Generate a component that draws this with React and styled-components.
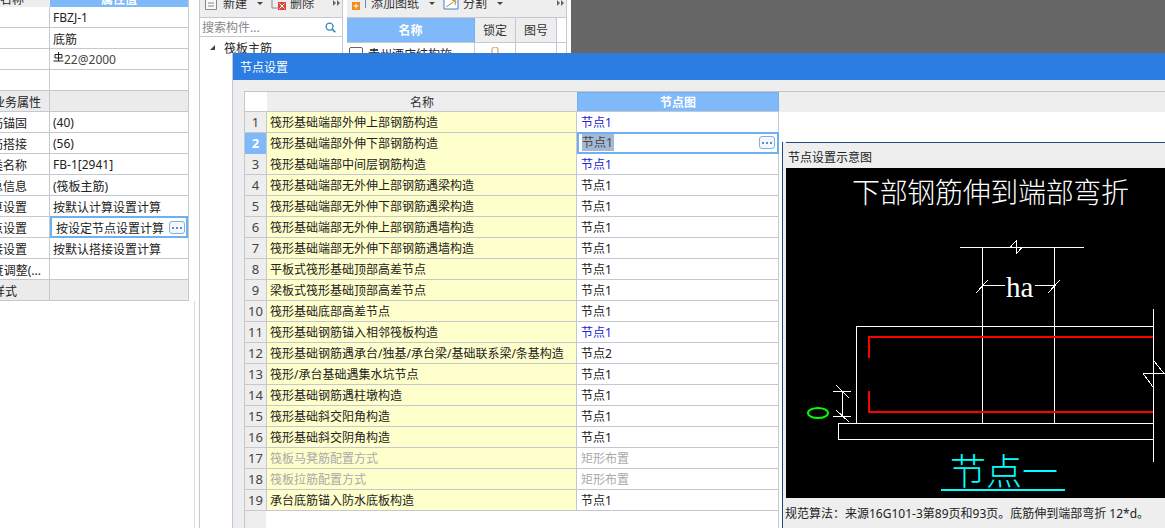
import styled, { createGlobalStyle } from "styled-components";

const GlobalStyle = createGlobalStyle`
    html, body {
        margin: 0;
        padding: 0;
        background: #fff;
        overflow: hidden;
    }
    * {
        box-sizing: border-box;
    }
    body {
        font-family: "Noto Sans", "Noto Sans CJK SC", "Liberation Sans", sans-serif;
        font-size: 12px;
        color: #222;
    }
`;

const Page = styled.div`
    position: relative;
    width: 1165px;
    height: 528px;
    overflow: hidden;
    display: flex;
    background: #fff;
`;

/* property grid on the far left */
const PropTable = styled.div`
    width: 189px;
    flex: none;
    align-self: flex-start;
    border-right: 1px solid #c4c8d0;
`;

const PropHead = styled.div`
    height: 7px;
    display: grid;
    grid-template-columns: 50px 1fr;
    overflow: hidden;
    background: #eee;
`;

const PropHeadLabel = styled.div`
    height: 7px;
    line-height: 14px;
    margin-top: -7px;
    padding-top: 0;
    text-align: right;
    padding-right: 26px;
    white-space: nowrap;
`;

const PropHeadValue = styled.div`
    background: #7fb9f9;
    color: #fff;
    font-weight: 700;
    line-height: 14px;
    margin-top: -7px;
    height: 14px;
    text-align: center;
`;

const PropRow = styled.div`
    height: 21px;
    display: grid;
    grid-template-columns: 50px 1fr;
    border-bottom: 1px solid #c4c8d0;
    background: ${(p) => (p.$group ? "#ebebeb" : "#fff")};
`;

const PropLabel = styled.div`
    display: flex;
    justify-content: flex-end;
    align-items: center;
    overflow: hidden;
    white-space: nowrap;
    border-right: 1px solid #c4c8d0;
    padding: 1px ${(p) => p.$inset}px 0 0;
`;

const PropValue = styled.div`
    display: flex;
    align-items: center;
    padding: 1px 0 0 3px;
    white-space: nowrap;
    color: ${(p) => p.$tone || "#222"};
`;

const PropEditor = styled.div`
    display: flex;
    align-items: center;
    justify-content: space-between;
    margin: -1px 0 -1px 0;
    height: 22px;
    padding: 1px 1px 0 4px;
    border: 2px solid #6fb0f0;
    background: #fff;
    white-space: nowrap;
`;

const MoreButton = styled.span`
    width: 16px;
    height: 13px;
    flex: none;
    display: flex;
    align-items: center;
    justify-content: center;
    gap: 2px;
    border: 1px solid #7fb0e0;
    border-radius: 3px;
    background: #f4f8fd;

    i {
        width: 2px;
        height: 2px;
        background: #5a90c8;
    }
`;

const Gutter = styled.div`
    width: 11px;
    flex: none;
    border-right: 1px solid #c4c8d0;
    position: relative;

    &::before {
        content: "";
        position: absolute;
        top: 301px;
        bottom: 0;
        left: 5px;
        width: 1px;
        background: #dcdcdc;
    }
`;

/* the two drawing panels behind the dialog */
const Panel = styled.div`
    flex: none;
    width: ${(p) => p.$width}px;
    margin-right: ${(p) => p.$gap}px;
    border-right: 1px solid #c4c8d0;
    display: flex;
    flex-direction: column;
`;

const Toolbar = styled.div`
    height: 18px;
    flex: none;
    overflow: hidden;
    background: #eee;
    border-bottom: 1px solid #c4c8d0;
    position: relative;
`;

const ToolRow = styled.div`
    height: 18px;
    margin-top: -6px;
    display: flex;
    align-items: center;
    padding-left: ${(p) => p.$pad}px;
`;

const ToolIcon = styled.svg`
    flex: none;
    margin-right: ${(p) => p.$gap}px;
`;

const ToolText = styled.span`
    white-space: nowrap;
    color: #333;
`;

const Caret = styled.span`
    width: 0;
    height: 0;
    margin: 0 ${(p) => p.$after}px 0 10px;
    border-left: 3px solid transparent;
    border-right: 3px solid transparent;
    border-top: 3px solid #444;
`;

const Overflow = styled.span`
    position: absolute;
    top: 0;
    right: 2px;
    display: flex;
    gap: 1px;

    i {
        width: 0;
        height: 0;
        border-top: 3px solid transparent;
        border-bottom: 3px solid transparent;
        border-left: 3px solid #666;
    }
`;

const SearchBar = styled.div`
    height: 19px;
    flex: none;
    display: flex;
    align-items: center;
    padding: 0 6px 0 2px;
    border-bottom: 1px solid #c4c8d0;
`;

const SearchInput = styled.input`
    flex: 1;
    min-width: 0;
    border: none;
    outline: none;
    padding: 0;
    font: inherit;
    background: transparent;

    &::placeholder {
        color: #888;
        opacity: 1;
    }
`;

const TreeRow = styled.div`
    height: 21px;
    display: flex;
    align-items: center;
    padding-left: 10px;
`;

const TreeArrow = styled.span`
    width: 0;
    height: 0;
    margin: 0 9px 0 0;
    border-bottom: 5px solid #444;
    border-left: 5px solid transparent;
`;

const DrawingHead = styled.div`
    height: 25px;
    flex: none;
    display: grid;
    grid-template-columns: 128px 41px 41px 1fr;
    border-bottom: 1px solid #c4c8d0;
`;

const HeadCell = styled.div`
    display: flex;
    align-items: center;
    justify-content: center;
    font-weight: ${(p) => (p.$active ? 700 : 400)};
    color: ${(p) => (p.$active ? "#fff" : "#333")};
    background: ${(p) => (p.$active ? "#7fb9f9" : p.$blank ? "#fff" : "#eee")};
    border-right: 1px solid ${(p) => (p.$active ? "#6fb0f0" : "#c4c8d0")};
    ${(p) => p.$blank && "border-right: none;"}
`;

const DrawingRow = styled.div`
    height: 21px;
    display: grid;
    grid-template-columns: 128px 41px 41px;
`;

const DrawingCell = styled.div`
    display: flex;
    align-items: center;
    justify-content: ${(p) => (p.$center ? "center" : "flex-start")};
    gap: 5px;
    padding-left: ${(p) => (p.$center ? 0 : 2)}px;
    border-right: 1px solid #c4c8d0;
    white-space: nowrap;
    overflow: hidden;
`;

const Collapse = styled.span`
    width: 14px;
    height: 14px;
    flex: none;
    border: 1px solid #666;
    border-radius: 2px;
    display: flex;
    align-items: center;
    justify-content: center;

    &::after {
        content: "";
        width: 6px;
        height: 2px;
        background: #333;
    }
`;

const Backdrop = styled.div`
    flex: 1;
    height: 53px;
    background: #666;
`;

/* dialog sits over everything else */
const Dialog = styled.div`
    position: absolute;
    left: 232px;
    top: 53px;
    right: 0;
    bottom: 0;
    display: flex;
    flex-direction: column;
    background: #eee;
    border-left: 1px solid #bcc8dc;
`;

const DialogTitle = styled.div`
    height: 27px;
    flex: none;
    display: flex;
    align-items: center;
    padding-left: 7px;
    background: #2b7de1;
    color: #fff;
`;

const DialogBody = styled.div`
    flex: 1;
    min-height: 0;
    padding: 11px 0 0 11px;
    display: flex;
`;

const Frame = styled.div`
    flex: 1;
    display: flex;
    border-top: 1px solid #c4c4c4;
    border-left: 1px solid #c4c8d0;
    background: #fff;
`;

const GridSide = styled.div`
    width: 534px;
    flex: none;
    display: flex;
    flex-direction: column;
    border-right: 1px solid #c4c8d0;
    background: linear-gradient(to right, #eee 21px, #fff 21px);
`;

const GridRow = styled.div`
    display: grid;
    grid-template-columns: 22px 310px 1fr;
    height: ${(p) => (p.$head ? 20 : 21)}px;
    margin-right: -1px;
    border-bottom: 1px solid #c4c8d0;
`;

const RowNo = styled.div`
    display: flex;
    align-items: center;
    justify-content: center;
    padding-bottom: 1px;
    font-size: 13px;
    border-right: 1px solid #c4c8d0;
    background: ${(p) => (p.$active ? "#7fb9f9" : p.$head ? "#fff" : "#eee")};
    color: ${(p) => (p.$active ? "#fff" : "#444")};
    font-weight: ${(p) => (p.$active ? 700 : 400)};
    ${(p) => p.$head && "border-right: none;"}
`;

const NameCell = styled.div`
    display: flex;
    align-items: center;
    padding: 0 0 1px 3px;
    white-space: nowrap;
    border-right: 1px solid #c4c8d0;
    background: #ffc;
    color: ${(p) => (p.$muted ? "#aaa" : "#222")};
`;

const NameHead = styled.div`
    display: flex;
    align-items: center;
    justify-content: center;
    background: #eee;
    color: #333;
`;

const ValueHead = styled.div`
    display: flex;
    align-items: center;
    justify-content: center;
    background: #7fb9f9;
    color: #fff;
    font-weight: 700;
    border: 1px solid #6fb0f0;
    border-bottom: none;
`;

const ValueCell = styled.div`
    display: flex;
    align-items: center;
    padding: 0 0 1px 4px;
    white-space: nowrap;
    color: ${(p) => (p.$muted ? "#aaa" : p.$link ? "#2222dd" : "#222")};
`;

const ValueEditor = styled.div`
    display: flex;
    align-items: center;
    justify-content: space-between;
    height: 22px;
    margin-top: -1px;
    padding: 0 2px 1px 3px;
    border: 2px solid #6fb0f0;
    background: #fff;
`;

const Picked = styled.span`
    background: #a3b9d6;
    color: #444;
    line-height: 17px;
    padding-right: 1px;
`;

const SideColumn = styled.div`
    flex: 1;
    min-width: 0;
    display: flex;
    flex-direction: column;
`;

const SideHead = styled.div`
    height: 20px;
    flex: none;
    background: #eee;
`;

const SideBlank = styled.div`
    height: 30px;
    flex: none;
`;

const SidePanel = styled.div`
    flex: 1;
    margin-left: 3px;
    display: flex;
    flex-direction: column;
    background: #eee;
    border-left: 1px solid #1f4a7f;
    position: relative;

    &::before {
        content: "";
        position: absolute;
        top: 0;
        left: 3px;
        right: 0;
        height: 1px;
        background: #1f4a7f;
    }
`;

const SideTitle = styled.div`
    height: 26px;
    flex: none;
    display: flex;
    align-items: center;
    padding: 3px 0 0 5px;
`;

const Sketch = styled.svg`
    display: block;
    flex: none;
    margin-left: 3px;
    background: #000;
`;

const SketchNote = styled.div`
    flex: 1;
    display: flex;
    align-items: center;
    padding: 0 0 0 2px;
    white-space: nowrap;
`;

const rows = [
    { name: "筏形基础端部外伸上部钢筋构造", value: "节点1", link: true },
    { name: "筏形基础端部外伸下部钢筋构造", value: "节点1", editing: true },
    { name: "筏形基础端部中间层钢筋构造", value: "节点1", link: true },
    { name: "筏形基础端部无外伸上部钢筋遇梁构造", value: "节点1" },
    { name: "筏形基础端部无外伸下部钢筋遇梁构造", value: "节点1" },
    { name: "筏形基础端部无外伸上部钢筋遇墙构造", value: "节点1" },
    { name: "筏形基础端部无外伸下部钢筋遇墙构造", value: "节点1" },
    { name: "平板式筏形基础顶部高差节点", value: "节点1" },
    { name: "梁板式筏形基础顶部高差节点", value: "节点1" },
    { name: "筏形基础底部高差节点", value: "节点1" },
    { name: "筏形基础钢筋锚入相邻筏板构造", value: "节点1", link: true },
    { name: "筏形基础钢筋遇承台/独基/承台梁/基础联系梁/条基构造", value: "节点2" },
    { name: "筏形/承台基础遇集水坑节点", value: "节点1" },
    { name: "筏形基础钢筋遇柱墩构造", value: "节点1" },
    { name: "筏形基础斜交阳角构造", value: "节点1" },
    { name: "筏形基础斜交阴角构造", value: "节点1" },
    { name: "筏板马凳筋配置方式", value: "矩形布置", muted: true },
    { name: "筏板拉筋配置方式", value: "矩形布置", muted: true },
    { name: "承台底筋锚入防水底板构造", value: "节点1" },
];

const props = [
    { label: "", value: "FBZJ-1", inset: 8 },
    { label: "", value: "底筋", inset: 8 },
    { label: "", value: "22@2000", rebar: true, inset: 8 },
    { label: "", value: "", inset: 8 },
    { label: "业务属性", value: "", group: true, inset: 8 },
    { label: "钢筋锚固", value: "(40)", inset: 22 },
    { label: "钢筋搭接", value: "(56)", inset: 22 },
    { label: "归类名称", value: "FB-1[2941]", inset: 22 },
    { label: "汇总信息", value: "(筏板主筋)", inset: 22 },
    { label: "计算设置", value: "按默认计算设置计算", inset: 22 },
    { label: "节点设置", value: "按设定节点设置计算", editing: true, inset: 22 },
    { label: "搭接设置", value: "按默认搭接设置计算", inset: 22 },
    { label: "保护层厚度调整(...", value: "", inset: 8 },
    { label: "显示样式", value: "", group: true, inset: 32 },
];

const More = () => (
    <MoreButton>
        <i />
        <i />
        <i />
    </MoreButton>
);

const RebarMark = () => (
    <svg width="11" height="11" viewBox="0 0 11 11" style={{ marginRight: 0, marginTop: -4 }}>
        <path d="M5.5 0v9M2 2.5h7v3.5H2zM0.5 9h10" fill="none" stroke="#222" strokeWidth="1" />
    </svg>
);

const NodeSketch = () => (
    <Sketch width="379" height="330" viewBox="0 0 379 330">
        <g fill="none" stroke="#fff" strokeWidth="1" shapeRendering="crispEdges">
            <path d="M174 79.5H298M224 79.5L230 73V86L236 79.5" />
            <path d="M196.5 79.5V255.5M268.5 79.5V255.5" />
            <path d="M196.5 117.5H219M249 117.5H268.5M190 125L202 112M262 125L274 112" />
            <path d="M367.5 158.5H70.5V255.5M367.5 141V294" />
            <path d="M367.5 255.5H52.5V271.5H367.5" />
            <path d="M47 223.5H65M47 248.5H65M56.5 223.5V248.5M50 217L63 230M50 242L63 254" />
            <path d="M357 205.5H379M357 205.5L367 219M368 193L378 205.5" />
        </g>
        <path d="M83 190V169H367M83 223V244H367" fill="none" stroke="#f00" strokeWidth="2" shapeRendering="crispEdges" />
        <ellipse cx="32" cy="245" rx="10" ry="5" fill="none" stroke="#0f0" strokeWidth="2" />
        <text x="66" y="35" fill="#fff" fontSize="28" fontWeight="300" textLength="277">
            下部钢筋伸到端部弯折
        </text>
        <text x="220" y="129" fill="#fff" fontSize="29" fontFamily="'Liberation Serif', serif">
            ha
        </text>
        <text x="164" y="317" fill="#0ff" fontSize="36" fontWeight="300" textLength="108">
            节点一
        </text>
        <rect x="155" y="321" width="124" height="2" fill="#0ff" />
    </Sketch>
);

const Chevrons = () => (
    <Overflow>
        <i />
        <i />
    </Overflow>
);

const App = () => {
    return (
        <>
            <GlobalStyle />
            <Page>
                <PropTable>
                    <PropHead>
                        <PropHeadLabel>名称</PropHeadLabel>
                        <PropHeadValue>属性值</PropHeadValue>
                    </PropHead>
                    {props.map((p, i) => (
                        <PropRow key={i} $group={p.group}>
                            <PropLabel $inset={p.inset}>{p.label}</PropLabel>
                            {p.editing ? (
                                <PropEditor>
                                    {p.value}
                                    <More />
                                </PropEditor>
                            ) : (
                                <PropValue $tone={p.rebar ? "#444" : undefined}>
                                    {p.rebar && <RebarMark />}
                                    {p.value}
                                </PropValue>
                            )}
                        </PropRow>
                    ))}
                </PropTable>

                <Gutter />

                <Panel $width={143} $gap={4}>
                    <Toolbar>
                        <ToolRow $pad={5}>
                            <ToolIcon width="12" height="14" viewBox="0 0 12 14" $gap={6}>
                                <path d="M.5.5h11v13H.5zM3 7h6M3 10h6" fill="#f8f8f8" stroke="#888" />
                            </ToolIcon>
                            <ToolText>新建</ToolText>
                            <Caret $after={8} />
                            <ToolIcon width="15" height="14" viewBox="0 0 15 14" $gap={4}>
                                <path d="M1 1v11h6" fill="none" stroke="#888" />
                                <rect x="7" y="6" width="8" height="8" fill="#d9453d" />
                                <path d="M8.5 7.5l5 5M13.5 7.5l-5 5" stroke="#fff" />
                            </ToolIcon>
                            <ToolText>删除</ToolText>
                        </ToolRow>
                        <Chevrons />
                    </Toolbar>
                    <SearchBar>
                        <SearchInput readOnly placeholder="搜索构件..." />
                        <svg width="11" height="11" viewBox="0 0 12 12">
                            <circle cx="5" cy="5" r="3.8" fill="none" stroke="#2b86b8" strokeWidth="1.4" />
                            <path d="M8 8l3.2 3.2" stroke="#2b86b8" strokeWidth="1.8" />
                        </svg>
                    </SearchBar>
                    <TreeRow>
                        <TreeArrow />
                        筏板主筋
                    </TreeRow>
                </Panel>

                <Panel $width={220} $gap={4}>
                    <Toolbar>
                        <ToolRow $pad={5}>
                            <ToolIcon width="14" height="14" viewBox="0 0 14 14" $gap={5}>
                                <path d="M7 1.5h6.5V12" fill="none" stroke="#5a8fc8" />
                                <rect x="0" y="6" width="8" height="8" fill="#f08a1d" />
                                <path d="M4 7.5v5M1.5 10h5" stroke="#fff" />
                            </ToolIcon>
                            <ToolText>添加图纸</ToolText>
                            <Caret $after={8} />
                            <ToolIcon width="16" height="14" viewBox="0 0 16 14" $gap={4}>
                                <path d="M1 3h14v10H1z" fill="#fff" stroke="#3b7fd0" />
                                <path d="M3 11L12 5M9 4l4 1-1 4" fill="none" stroke="#b08a3a" />
                            </ToolIcon>
                            <ToolText>分割</ToolText>
                            <Caret $after={0} />
                        </ToolRow>
                        <Chevrons />
                    </Toolbar>
                    <DrawingHead>
                        <HeadCell $active>名称</HeadCell>
                        <HeadCell>锁定</HeadCell>
                        <HeadCell>图号</HeadCell>
                        <HeadCell $blank />
                    </DrawingHead>
                    <DrawingRow>
                        <DrawingCell>
                            <Collapse />
                            贵州酒店结构施
                        </DrawingCell>
                        <DrawingCell $center>
                            <svg width="10" height="14" viewBox="0 0 10 14">
                                <path d="M2 12V3a3 3 0 0 1 6 0v8" fill="none" stroke="#e0a060" strokeWidth="1.2" />
                            </svg>
                        </DrawingCell>
                        <DrawingCell />
                    </DrawingRow>
                </Panel>

                <Backdrop />

                <Dialog>
                    <DialogTitle>节点设置</DialogTitle>
                    <DialogBody>
                        <Frame>
                            <GridSide>
                                <GridRow $head>
                                    <RowNo $head />
                                    <NameHead>名称</NameHead>
                                    <ValueHead>节点图</ValueHead>
                                </GridRow>
                                {rows.map((r, i) => (
                                    <GridRow key={r.name}>
                                        <RowNo $active={r.editing}>{i + 1}</RowNo>
                                        <NameCell $muted={r.muted}>{r.name}</NameCell>
                                        {r.editing ? (
                                            <ValueEditor>
                                                <Picked>{r.value}</Picked>
                                                <More />
                                            </ValueEditor>
                                        ) : (
                                            <ValueCell $link={r.link} $muted={r.muted}>
                                                {r.value}
                                            </ValueCell>
                                        )}
                                    </GridRow>
                                ))}
                            </GridSide>
                            <SideColumn>
                                <SideHead />
                                <SideBlank />
                                <SidePanel>
                                    <SideTitle>节点设置示意图</SideTitle>
                                    <NodeSketch />
                                    <SketchNote>规范算法：来源16G101-3第89页和93页。底筋伸到端部弯折 12*d。</SketchNote>
                                </SidePanel>
                            </SideColumn>
                        </Frame>
                    </DialogBody>
                </Dialog>
            </Page>
        </>
    );
};

export default App;
